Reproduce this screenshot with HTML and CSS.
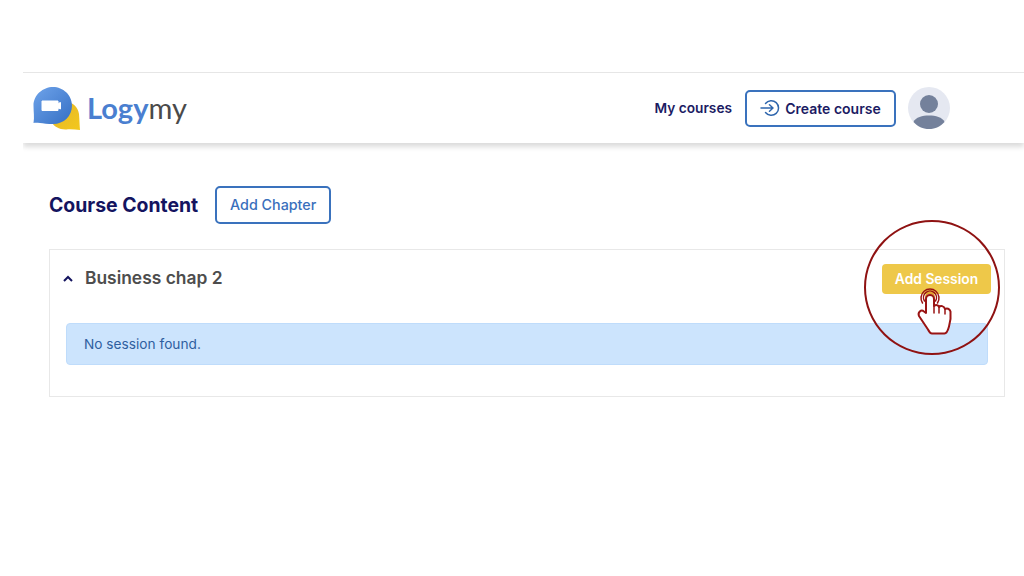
FILE: index.html
```html
<!DOCTYPE html>
<html lang="en">
<head>
<meta charset="utf-8">
<title>Logymy - Course Content</title>
<link rel="stylesheet" href="styles.css">
</head>
<body>
<div class="app">
  <header class="topbar">
    <a class="brand">
      <svg class="brand-mark" width="48" height="46" viewBox="0 0 48 46">
        <defs>
          <linearGradient id="blue" x1="0" y1="0" x2="1" y2="1"><stop offset="0" stop-color="#6ea3ea"/><stop offset="1" stop-color="#356fc4"/></linearGradient>
          <linearGradient id="gold" x1="0" y1="0" x2="1" y2="1"><stop offset="0" stop-color="#e3b52a"/><stop offset="1" stop-color="#f3c81c"/></linearGradient>
        </defs>
        <path d="M22 15h11c7 0 12 5 13 12 .5 6 .5 11 1 16-4-.6-8-.8-12-.7-7 1-14-2-17-8z" fill="url(#gold)"/>
        <path d="M20 0c10 0 19 8 19 18.500S31 37 20 37c-5 0-10-.5-13-1-3-.4-5-.5-6.500 0C1.500 30 .5 25 .5 18.500.5 8 10 0 20 0z" fill="url(#blue)"/>
        <path d="M9 14h16v2.500l2.500-1v6.500l-2.500-1v2.500H9z" fill="#fff" stroke="#fff" stroke-linejoin="round"/>
      </svg>
      <span class="brand-name"><span class="brand-logy">Logy</span><span class="brand-my">my</span></span>
    </a>
    <nav class="nav">
      <a class="nav-link">My courses</a>
      <a class="btn-create">
        <svg width="20" height="20" viewBox="0 0 20 20" fill="none" stroke="#2f66ad" stroke-width="1.500" stroke-linecap="round" stroke-linejoin="round">
          <path d="M5.500 5.500A7.300 7.300 0 1 1 5.500 14.500"/>
          <path d="M1 10h12M9.500 6.800 13 10l-3.500 3.200"/>
        </svg>
        <span>Create course</span>
      </a>
      <span class="avatar">
        <svg width="42" height="42" viewBox="0 0 42 42">
          <circle cx="21" cy="21" r="21" fill="#e5e8f1"/>
          <circle cx="21" cy="17" r="9" fill="#74819b"/>
          <path d="M5.500 35c2-5 9-6.500 15.500-6.500S34.500 30 36.500 35c-4 4.500-9.500 7-15.500 7S9.500 39.500 5.500 35z" fill="#74819b"/>
        </svg>
      </span>
    </nav>
  </header>

  <main class="content">
    <div class="title-row">
      <h1 class="page-title">Course Content</h1>
      <a class="btn-chapter">Add Chapter</a>
    </div>
    <section class="card">
      <div class="card-head">
        <div class="chapter">
          <svg class="chevron" width="10" height="7" viewBox="0 0 10 7" fill="none" stroke="#14145f" stroke-width="2"><path d="M1 6l4-4 4 4"/></svg>
          <h2 class="chapter-name">Business chap 2</h2>
        </div>
        <a class="btn-session">Add Session</a>
      </div>
      <div class="alert">No session found.</div>
    </section>
  </main>
</div>

<div class="ring"></div>
<svg class="hand" width="40" height="52" viewBox="0 0 40 52" fill="none" stroke="#9a1414" stroke-width="1.500" stroke-linecap="round" stroke-linejoin="round">
  <circle cx="14" cy="10" r="4" stroke="#e0a030" stroke-width="2"/>
  <path d="M8.500 14A6.500 6.500 0 1 1 19.500 14"/>
  <path d="M6.500 16A9 9 0 1 1 21.500 16"/>
  <path d="M10 26V12a4 4 0 0 1 8 0v7c2-1.500 4.500-1 5 1 1.500-1.500 5-1.500 6 2 2-1 4.500-.5 5.500 2.500.5 5 0 10-1.500 15-.8 3-2.500 7-4.500 7H16c-2 0-3-2-4-4L3 29c-1.500-3.500 2-7 5-4.500z" fill="#fff" stroke-width="2"/>
  <path d="M18 19v7M23 20v6M29 22v5"/>
</svg>
</body>
</html>
```

FILE: styles.css
```css
* { box-sizing: border-box; }

html, body { margin: 0; padding: 0; }

body {
  position: relative;
  width: 1024px;
  height: 576px;
  overflow: hidden;
  background: #fff;
  font-family: "Inter", "Liberation Sans", sans-serif;
}

.app {
  padding: 72px 0 0 23px;
}

.topbar {
  display: flex;
  align-items: center;
  justify-content: space-between;
  height: 71px;
  padding: 0 74px 0 10px;
  border-top: 1px solid #e6e6e6;
  box-shadow: 0 4px 5px rgba(0, 0, 0, 0.14);
  clip-path: inset(0 0 -14px 0);
}

.brand {
  display: flex;
  align-items: center;
  gap: 6px;
}

.brand-mark { margin-top: 4px; }

.brand-name {
  font-family: "Lato", "Liberation Sans", sans-serif;
  font-size: 29px;
  line-height: 36px;
}

.brand-logy { color: #4a7fd0; font-weight: 700; }
.brand-my { color: #4a4a4a; font-weight: 400; }

.nav {
  display: flex;
  align-items: center;
}

.nav-link {
  margin-right: 13px;
  font-size: 13.700px;
  font-weight: 600;
  color: #1b1b63;
  white-space: nowrap;
}

.btn-create {
  display: flex;
  align-items: center;
  justify-content: center;
  gap: 5px;
  width: 151px;
  height: 37px;
  margin-right: 12px;
  border: 2px solid #3a72bd;
  border-radius: 5px;
  font-size: 14px;
  font-weight: 600;
  color: #1b1b63;
}

.avatar { display: block; width: 42px; height: 42px; }
.avatar svg { display: block; }

.content {
  padding: 42px 19px 0 26px;
}

.title-row {
  display: flex;
  align-items: center;
  gap: 17px;
  height: 39px;
}

.page-title {
  margin: 0;
  font-size: 19.400px;
  font-weight: 700;
  color: #14145f;
  white-space: nowrap;
}

.btn-chapter {
  display: flex;
  align-items: center;
  justify-content: center;
  width: 116px;
  height: 38px;
  border: 2px solid #3a72bd;
  border-radius: 5px;
  font-size: 14.300px;
  font-weight: 500;
  color: #3a6fbc;
}

.card {
  height: 148px;
  margin-top: 25px;
  padding: 13px 16px 0 16px;
  border: 1px solid #e8e8e8;
}

.card-head {
  display: flex;
  align-items: center;
  justify-content: space-between;
  height: 31px;
}

.chapter {
  display: flex;
  align-items: center;
  gap: 12px;
  margin-top: -2px;
}

.chevron { margin-left: -3px; margin-top: 2px; }

.chapter-name {
  margin: 0;
  font-size: 17.400px;
  font-weight: 600;
  color: #4d4d4d;
  white-space: nowrap;
}

.btn-session {
  display: flex;
  align-items: center;
  justify-content: center;
  width: 109px;
  height: 30px;
  margin-right: -3px;
  border-radius: 4px;
  background: #eec849;
  font-size: 13.800px;
  font-weight: 600;
  color: #fff;
}

.alert {
  display: flex;
  align-items: center;
  height: 42px;
  margin-top: 29px;
  padding-left: 17px;
  border: 1px solid #bfdcfb;
  border-radius: 4px;
  background: #cce4fd;
  font-size: 13.700px;
  color: #2f5f9f;
}

.ring {
  position: absolute;
  left: 864px;
  top: 220px;
  width: 136px;
  height: 135px;
  border: 2px solid #8f1212;
  border-radius: 50%;
}

.hand {
  position: absolute;
  left: 916px;
  top: 287px;
}
```
